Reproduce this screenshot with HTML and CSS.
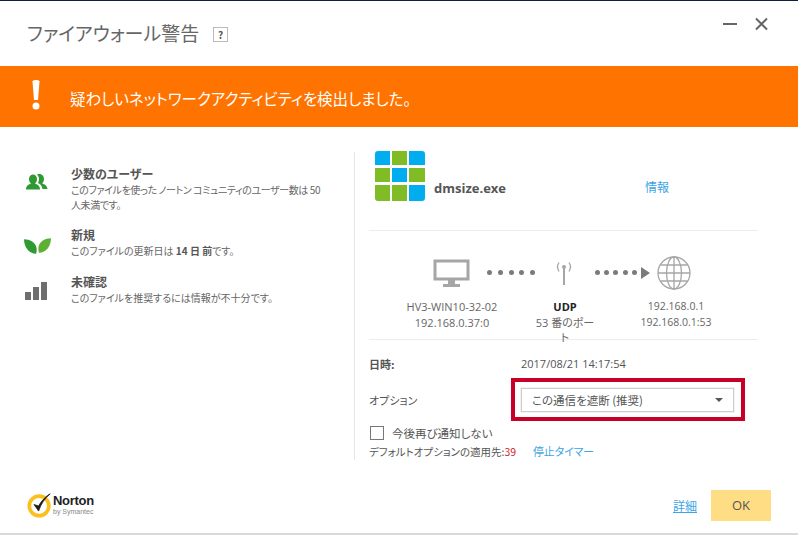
FILE: index.html
```html
<!DOCTYPE html>
<html lang="ja">
<head>
  <meta charset="UTF-8" />
  <title>ファイアウォール警告</title>
  <link rel="stylesheet" href="styles.css">
</head>
<body>
  <div class="dialog">
    <div class="title-bar">
      <h1>ファイアウォール警告</h1>
      <span class="help">?</span>
      <div class="window-buttons">
        <svg width="14" height="14" viewBox="0 0 14 14"><path d="M0 7h14" stroke="#666" stroke-width="2"/></svg>
        <svg width="14" height="14" viewBox="0 0 14 14"><path d="M2 1.500l11 11M13 1.500l-11 11" stroke="#666" stroke-width="2"/></svg>
      </div>
    </div>

    <div class="banner">
      <svg class="banner-mark" width="10" height="30" viewBox="0 0 10 30"><path d="M1.500 1.500c0-2 7-2 7 0L7 20H3z" fill="#fff"/><circle cx="5" cy="26" r="3.500" fill="#fff"/></svg>
      <span>疑わしいネットワークアクティビティを検出しました。</span>
    </div>

    <div class="content">
      <div class="facts">
        <div class="fact">
          <svg class="fact-icon" width="24" height="16" viewBox="0 0 24 16">
            <path d="M13 .5c4-1.500 7 1 7 4.500 0 2-1 3.500-2 4.500 3 .8 5 2 5.500 5.500h-5c-.5-3-2-5-4.500-6 1.500-3 1.500-6-1-8.500z" fill="#2e9a31"/>
            <path d="M2 15.500c0-3.500 2-5 5-5.800-1.500-1.500-2-3-2-4.700 0-3 2-4.500 4-4.500s4 1.500 4 4.500c0 1.700-.5 3.200-2 4.700 3 .8 5 2.300 5 5.800z" fill="#2e9a31"/>
          </svg>
          <div>
            <h3>少数のユーザー</h3>
            <p class="tight">このファイルを使った ノートン コミュニティのユーザー数は 50 人未満です。</p>
          </div>
        </div>
        <div class="fact">
          <svg class="fact-icon leaf" width="27" height="16" viewBox="0 0 28 16">
            <path d="M0 1c6 0 12 3 13 9 .3 2 .2 4-.5 6C5 16 0 9 0 1z" fill="#2e9a31"/>
            <path d="M28 0c-6 0-12 3-13 9-.3 2 0 4 .5 6C23 15 28 8 28 0z" fill="#5cb034"/>
          </svg>
          <div>
            <h3>新規</h3>
            <p>このファイルの更新日は <b>14 日 前</b>です。</p>
          </div>
        </div>
        <div class="fact">
          <svg class="fact-icon" width="24" height="18" viewBox="0 0 24 18">
            <path d="M1 10h6v8H1zM9 5h6v13H9zM17 0h6v18h-6z" fill="#6e6e6e"/>
          </svg>
          <div>
            <h3>未確認</h3>
            <p>このファイルを推奨するには情報が不十分です。</p>
          </div>
        </div>
      </div>

      <div class="details">
        <div class="file-row">
          <svg width="50" height="50" viewBox="0 0 50 50">
            <path d="M3 0h12v14H0V3a3 3 0 0 1 3-3zM34 0h13a3 3 0 0 1 3 3v11H34zM17 17h15v14H17zM34 34h16v13a3 3 0 0 1-3 3H34z" fill="#00aeef"/>
            <path d="M17 0h15v14H17zM0 17h15v14H0zM34 17h16v14H34zM0 34h15v16H3a3 3 0 0 1-3-3zM17 34h15v16H17z" fill="#7fbc25"/>
          </svg>
          <span class="file-name">dmsize.exe</span>
          <a class="link info-link">情報</a>
        </div>

        <div class="net">
          <div class="net-icons">
            <svg width="37" height="28" viewBox="0 0 37 28">
              <path d="M2 2h33v18H2z" fill="none" stroke="#a6a6a6" stroke-width="3"/>
              <path d="M15 21h7v4h-7zM10 25h17v3H10z" fill="#a6a6a6"/>
            </svg>
            <div class="dots"><i></i><i></i><i></i><i></i><i></i></div>
            <svg class="antenna" width="16" height="24" viewBox="0 0 16 24">
              <path d="M8 7v17" stroke="#a6a6a6" stroke-width="2"/>
              <circle cx="8" cy="6" r="2" fill="#a6a6a6"/>
              <path d="M3 1.500c-2 3-2 6 0 9M13 1.500c2 3 2 6 0 9" fill="none" stroke="#a6a6a6" stroke-width="1.300"/>
            </svg>
            <div class="dots dots-arrow"><i></i><i></i><i></i><i></i><i></i><b></b></div>
            <svg width="34" height="34" viewBox="0 0 34 34" fill="none" stroke="#a6a6a6" stroke-width="1.300">
              <circle cx="17" cy="17" r="16"/>
              <ellipse cx="17" cy="17" rx="7.500" ry="16"/>
              <path d="M17 1v32M1 17h32M3.500 9h27M3.500 25h27"/>
            </svg>
          </div>
          <div class="net-labels">
            <div class="node node-src">HV3-WIN10-32-02<br>192.168.0.37:0</div>
            <div class="node node-proto"><b>UDP</b><br>53 番のポート</div>
            <div class="node node-dst">192.168.0.1<br>192.168.0.1:53</div>
          </div>
        </div>

        <div class="info">
          <div class="info-row date-row">
            <span class="info-label date-label">日時:</span>
            <span class="date-value">2017/08/21 14:17:54</span>
          </div>
          <div class="info-row option-row">
            <span class="info-label option-label">オプション</span>
            <div class="highlight">
              <div class="select">
                <span>この通信を遮断 (推奨)</span>
                <i class="caret"></i>
              </div>
            </div>
          </div>
          <label class="check"><i class="box"></i>今後再び通知しない</label>
          <div class="timer">デフォルトオプションの適用先:<span class="count">39</span><a class="link timer-link">停止タイマー</a></div>
        </div>
      </div>
    </div>

    <div class="footer">
      <div class="norton">
        <svg width="26" height="28" viewBox="0 0 28 28">
          <circle cx="13" cy="15" r="10.500" fill="none" stroke="#fcc01e" stroke-width="4"/>
          <path d="M7.500 13.500l5 7C15 13 19 7 25 2c-4 2-9 7-12.500 13z" fill="#1a1a1a" stroke="#1a1a1a" stroke-width=".8"/>
        </svg>
        <div class="norton-text">
          <strong>Norton</strong>
          <span>by Symantec</span>
        </div>
      </div>
      <a class="link details-link">詳細</a>
      <button type="button">OK</button>
    </div>
  </div>
</body>
</html>
```

FILE: styles.css
```css
* { box-sizing: border-box; }
html, body {
  margin: 0; padding: 0;
  background: #fff;
  font-family: "Noto Sans CJK JP", "Noto Sans", sans-serif;
  font-feature-settings: "palt";
  color: #555;
}
.dialog {
  width: 798px; height: 535px;
  display: flex; flex-direction: column;
  border-top: 1px solid #0c2340;
  border-bottom: 2px solid #d9d9d9;
}
.title-bar {
  height: 65px; flex: none;
  display: flex; align-items: center;
  padding: 0 30px 0 27px;
}
h1 {
  margin: -2px 0 0; font-size: 19px;
  font-weight: 400; color: #666;
}
.help {
  width: 15px; height: 15px;
  margin: 2px 0 0 14px;
  border: 1px solid #bbb;
  font-size: 10px; line-height: 13px;
  font-weight: 700; text-align: center;
  color: #555;
}
.window-buttons {
  margin-left: auto; margin-top: -20px;
  display: flex; gap: 17px;
}
.banner {
  height: 61px; flex: none;
  background: #ff7300;
  display: flex; align-items: center;
  padding: 0 0 0 31px;
  color: #fff; font-size: 15.500px;
}
.banner span { margin-top: 3px; }
.banner-mark { margin: -4px 29px 0 0; }
.content { flex: 1; display: flex; padding-top: 25px; }
.facts { width: 327px; margin-left: 27px; padding-top: 14px; }
.fact { display: flex; align-items: flex-start; margin-bottom: 16px; }
.fact:first-child { margin-bottom: 15px; }
.fact-icon { flex: none; width: 24px; margin: 8px 23px 0 -3px; }
.fact-icon.leaf { width: 27px; margin: 11px 20px 0 -3px; }
.fact h3 {
  margin: 0; font-size: 12px;
  line-height: 16px; font-weight: 700;
  color: #555;
}
.fact p {
  margin: 0; font-size: 10px;
  line-height: 15px; width: 252px;
  color: #666;
}
.fact p.tight { letter-spacing: -.4px; }
.fact b { color: #555; }
.details {
  width: 404px; height: 308px;
  border-left: 1px solid #e6e6e6;
  padding-left: 14px;
}
.file-row {
  height: 80px; display: flex;
  align-items: flex-start;
  border-bottom: 1px solid #ececec;
  padding-left: 6px;
  margin-top: -1px;
}
.file-name {
  margin: 28px 0 0 9px;
  font-family: "Open Sans", sans-serif;
  font-size: 13px; font-weight: 700;
  color: #555;
}
.link { color: #3aa4e4; font-size: 12px; }
.info-link { margin: 27px 0 0 139px; }
.net { height: 109px; border-bottom: 1px solid #ececec; }
.net-icons {
  display: flex; align-items: center;
  padding: 21px 0 0 64px; height: 62px;
}
.dots {
  width: 48px; margin: 0 21px 0 17px;
  display: flex; justify-content: space-between; align-items: center;
}
.dots i {
  width: 5px; height: 5px;
  border-radius: 50%; background: #7b7b7b;
}
.dots-arrow { width: 55px; margin: 0 7px 0 23px; }
.dots-arrow b {
  width: 0; height: 0;
  border-left: 9px solid #7b7b7b;
  border-top: 6px solid transparent;
  border-bottom: 6px solid transparent;
}
.net-labels {
  display: flex; margin-top: 6px;
  padding-left: 28px;
  font-family: "Open Sans", "Noto Sans CJK JP", sans-serif;
}
.node {
  font-size: 11px; line-height: 15.500px;
  text-align: center; color: #666;
}
.node b { color: #222; }
.node-src { width: 110px; }
.node-proto { width: 62px; margin-left: 27px; }
.node-dst { width: 100px; margin-left: 30px; font-size: 10.500px; }
.info { font-size: 11px; }
.info-row { display: flex; align-items: center; }
.info-label { flex: none; }
.date-label { width: 152px; font-weight: 700; }
.date-value { font-family: "Open Sans", sans-serif; font-size: 11px; }
.option-label { width: 142px; padding-top: 2px; }
.date-row { height: 37px; padding-top: 10px; }
.option-row { height: 44px; color: #555; }
.highlight {
  width: 234px; height: 43px;
  border: 4px solid #c80028;
  padding: 6px;
}
.select {
  height: 24px; width: 213px;
  border: 1px solid #ccc;
  display: flex; align-items: center; justify-content: space-between;
  padding: 0 10px;
  box-shadow: 0 0 0 1px #f2f2f2;
  font-size: 11.500px;
}
.caret {
  width: 0; height: 0;
  border-top: 4px solid #555;
  border-left: 4px solid transparent;
  border-right: 4px solid transparent;
}
.check {
  display: flex; align-items: center;
  height: 17px; margin-top: 3px;
  font-size: 11.500px;
}
.box {
  width: 14px; height: 14px;
  border: 1px solid #777;
  margin: 0 8px 0 1px;
}
.timer { font-size: 10.500px; height: 18px; line-height: 20px; }
.count { color: #d3242b; }
.timer-link { font-size: 10.800px; margin-left: 17px; }
.footer {
  height: 56px; flex: none;
  display: flex; align-items: center;
  padding: 0 27px;
}
.norton { display: flex; align-items: center; gap: 0; }
.norton-text { display: flex; flex-direction: column; font-family: "Liberation Sans", sans-serif; color: #222; }
.norton-text strong { font-size: 13px; line-height: 12px; letter-spacing: -.3px; }
.norton-text span { font-size: 7px; line-height: 9px; color: #888; }
.details-link { margin-left: auto; text-decoration: underline; }
button {
  margin-left: 14px;
  width: 60px; height: 31px;
  border: none; background: #ffdd85;
  font-family: "Open Sans", sans-serif;
  font-size: 13px; color: #555;
}
```
